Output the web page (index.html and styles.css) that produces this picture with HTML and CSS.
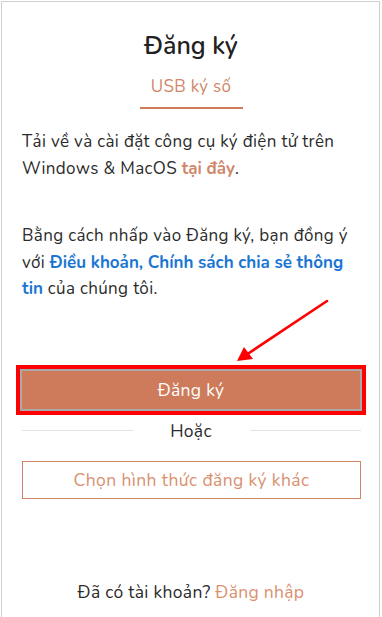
FILE: index.html
```html
<!DOCTYPE html>
<html lang="vi">
<head>
    <meta charset="UTF-8">
    <meta name="viewport" content="width=device-width, initial-scale=1.0">
    <title>Đăng ký</title>
    <link rel="stylesheet" href="styles.css">
</head>
<body>
   <div class="card">
       <!--tieu de-->
       <h1 class="title">Đăng ký</h1>
       <ul class="tabs">
           <li class="current">USB ký số</li>
       </ul>
       <!--noi dung-->
       <p class="text">Tải về và cài đặt công cụ ký điện tử trên Windows &amp; MacOS <a href="#" class="accent">tại đây</a>.</p>
       <p class="text terms">Bằng cách nhấp vào Đăng ký, bạn đồng ý với <a href="#" class="blue">Điều khoản, Chính sách chia sẻ thông tin</a> của chúng tôi.</p>

       <div class="submit-wrap">
           <button class="btn-main">Đăng ký</button>
           <!--mui ten chu thich-->
           <svg class="arrow" width="100" height="70" viewBox="0 0 100 70">
               <line x1="93" y1="4" x2="12" y2="58" stroke="#f00" stroke-width="2.6" stroke-linecap="round"/>
               <polygon points="3,64 10,50 19,62" fill="#f00"/>
           </svg>
       </div>

       <div class="or"><span>Hoặc</span></div>
       <a href="#" class="btn-other">Chọn hình thức đăng ký khác</a>

       <p class="login">Đã có tài khoản? <a href="#" class="accent-light">Đăng nhập</a></p>
   </div>
</body>
</html>
```

FILE: styles.css
```css
*{
    margin: 0;
    padding: 0;
    list-style: none;
    box-sizing: border-box;
}

body{
    font-family: "Nunito", "Open Sans", "Liberation Sans", sans-serif;
    color: #2b2b2b;
    background-color: #fff;
}

.card{
    margin: 1px 2px 0 1px;
    min-height: 640px;
    border: 1px solid #cfcfcf;
    border-bottom: none;
    padding: 24px 17px 0 18px;
}

.title{
    text-align: center;
    font-size: 25px;
    font-weight: 600;
    line-height: 40px;
    color: #222;
}

.tabs{
    display: flex;
    justify-content: center;
    margin-top: 9px;
}

.tabs li{
    width: 103px;
    text-align: center;
    font-size: 17px;
    letter-spacing: 0.3px;
    line-height: 24px;
    padding-bottom: 8px;
    color: #d0876a;
}

.tabs li.current{
    border-bottom: 2px solid #cd7b5b;
}

.text{
    font-size: 17px;
    letter-spacing: 0.35px;
    line-height: 26.5px;
    padding-left: 2px;
    color: #2b2b2b;
}

.text:first-of-type{
    margin-top: 20px;
}

.terms{
    margin-top: 41px;
}

.text a{
    text-decoration: none;
    font-weight: 700;
    letter-spacing: 0;
}

.accent{
    color: #d0876a;
}

.blue{
    color: #1a76d2;
}

.submit-wrap{
    /*定位约束*/
    position: relative;
    margin-top: 66px;
}

.btn-main{
    display: block;
    width: 100%;
    height: 42px;
    border: 2px solid #a9a9a9;
    background-color: #cd7b5b;
    color: #fff;
    font-family: inherit;
    font-size: 17.5px;
    letter-spacing: 0.3px;
    outline: 4px solid #f00;
}

.arrow{
    position: absolute;
    left: 214px;
    top: -72px;
}

.or{
    display: flex;
    align-items: center;
    margin: 5px 0 0 2px;
    padding-right: 1px;
    font-size: 17.5px;
    letter-spacing: 0.3px;
    line-height: 30px;
    color: #2b2b2b;
}

.or::before,
.or::after{
    content: "";
    flex: 1;
    height: 1px;
    background-color: #e2e2e2;
}

.or span{
    padding: 0 38px 0 37px;
}

.btn-other{
    display: flex;
    justify-content: center;
    align-items: center;
    height: 38px;
    margin: 15px 1px 0 2px;
    border: 1px solid #cf8367;
    font-size: 17.5px;
    letter-spacing: 0.4px;
    color: #d9906f;
    text-decoration: none;
}

.login{
    margin-top: 80px;
    text-align: center;
    font-size: 17.5px;
    letter-spacing: 0.3px;
    line-height: 26px;
}

.accent-light{
    color: #d9906f;
    text-decoration: none;
}
```
